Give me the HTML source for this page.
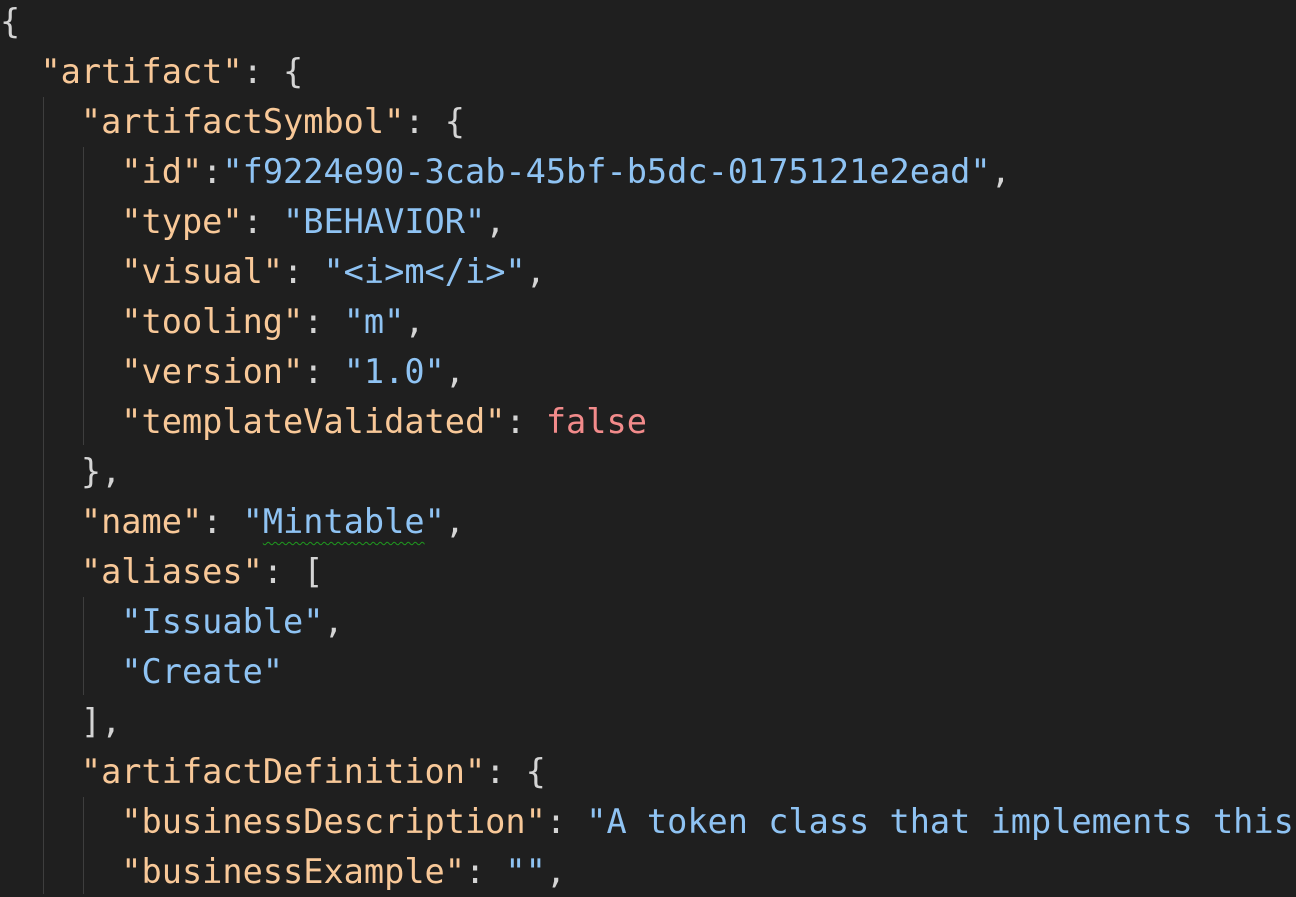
<!DOCTYPE html>
<html><head><style>
body{margin:0;background:#1f1f1f;width:1296px;height:894px;overflow:hidden;position:relative}
pre{margin:0;position:absolute;left:0px;top:-3px;width:1296px;overflow:hidden;font-family:"DejaVu Sans Mono","Liberation Mono",monospace;font-size:33.6px;line-height:50px;color:#d4d4d4;white-space:pre}
.k{color:#f8c898}.s{color:#8fc3f3}.f{color:#f28b8b}
.g{position:absolute;width:1px;background:#3e3e3e}
.w{text-decoration:underline wavy #1f9a1f;text-decoration-thickness:1px;text-underline-offset:8px}
</style></head><body>
<div class="g" style="left:43px;top:97px;height:797px"></div>
<div class="g" style="left:83px;top:147px;height:298px"></div>
<div class="g" style="left:83px;top:597px;height:98px"></div>
<div class="g" style="left:83px;top:797px;height:97px"></div>
<pre>{
  <span class="k">"artifact"</span>: {
    <span class="k">"artifactSymbol"</span>: {
      <span class="k">"id"</span>:<span class="s">"f9224e90-3cab-45bf-b5dc-0175121e2ead"</span>,
      <span class="k">"type"</span>: <span class="s">"BEHAVIOR"</span>,
      <span class="k">"visual"</span>: <span class="s">"&lt;i&gt;m&lt;/i&gt;"</span>,
      <span class="k">"tooling"</span>: <span class="s">"m"</span>,
      <span class="k">"version"</span>: <span class="s">"1.0"</span>,
      <span class="k">"templateValidated"</span>: <span class="f">false</span>
    },
    <span class="k">"name"</span>: <span class="s">"<span class="w">Mintable</span>"</span>,
    <span class="k">"aliases"</span>: [
      <span class="s">"Issuable"</span>,
      <span class="s">"Create"</span>
    ],
    <span class="k">"artifactDefinition"</span>: {
      <span class="k">"businessDescription"</span>: <span class="s">"A token class that implements this behavior</span>
      <span class="k">"businessExample"</span>: <span class="s">""</span>,
</pre>
</body></html>
